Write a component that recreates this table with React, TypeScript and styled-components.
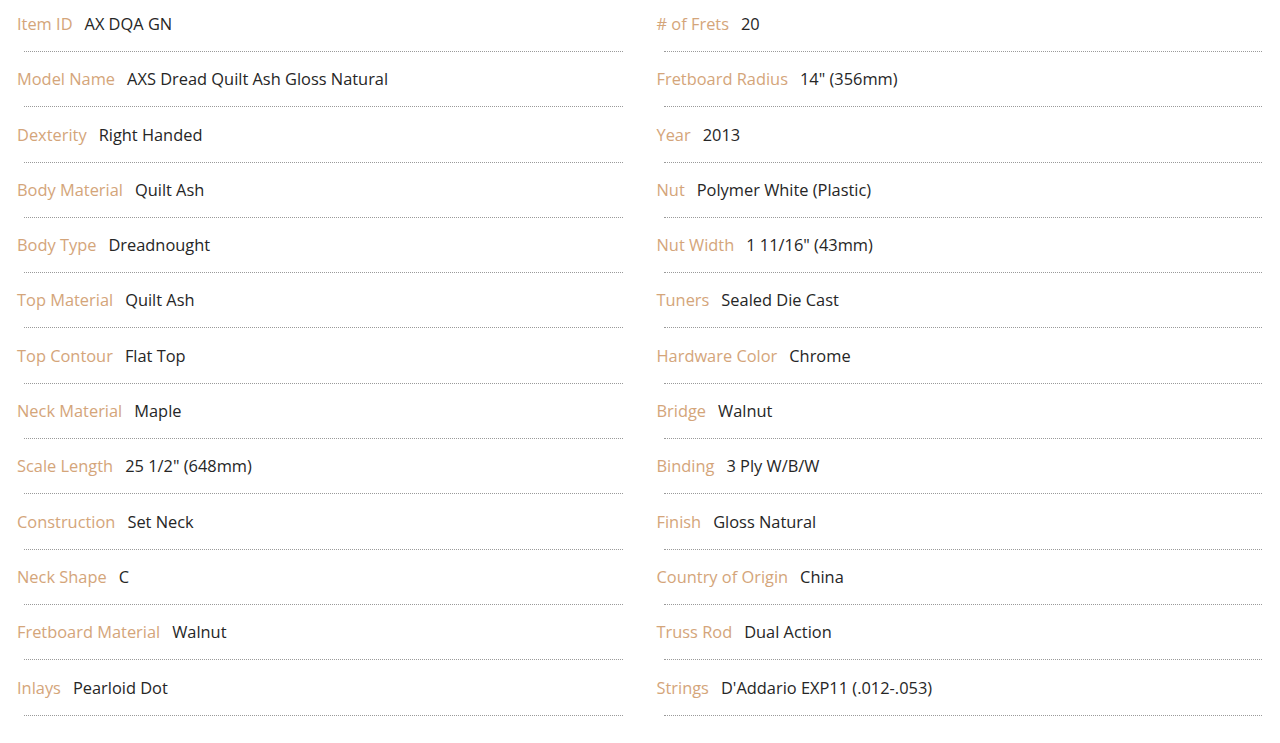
import React from "react";
import styled, { createGlobalStyle } from "styled-components";

const GlobalStyle = createGlobalStyle`
  body {
    margin: 0;
    background: #fff;
    font-family: "Open Sans", "Noto Sans", Arial, sans-serif;
  }
`;

const Specs = styled.div`
  display: grid;
  grid-template-columns: 1fr 1fr;
  column-gap: 34px;
  padding: 0 18px 0 17px;
`;

const Column = styled.ul`
  list-style: none;
  margin: 0;
  padding: 0;
`;

const Row = styled.li`
  padding-top: 13px;
  margin-bottom: 3.3px;
`;

const Line = styled.div`
  display: flex;
  gap: 12px;
  font-size: 16.4px;
  line-height: 22px;
  padding-bottom: 16px;
  white-space: nowrap;
`;

const Label = styled.span`
  color: #d4a57a;
`;

const Value = styled.span`
  color: #262626;
`;

const Rule = styled.div`
  margin-left: 7px;
  border-top: 1px dotted #9a9a9a;
`;

const left: [string, string][] = [
  ["Item ID", "AX DQA GN"],
  ["Model Name", "AXS Dread Quilt Ash Gloss Natural"],
  ["Dexterity", "Right Handed"],
  ["Body Material", "Quilt Ash"],
  ["Body Type", "Dreadnought"],
  ["Top Material", "Quilt Ash"],
  ["Top Contour", "Flat Top"],
  ["Neck Material", "Maple"],
  ["Scale Length", "25 1/2\" (648mm)"],
  ["Construction", "Set Neck"],
  ["Neck Shape", "C"],
  ["Fretboard Material", "Walnut"],
  ["Inlays", "Pearloid Dot"],
];

const right: [string, string][] = [
  ["# of Frets", "20"],
  ["Fretboard Radius", "14\" (356mm)"],
  ["Year", "2013"],
  ["Nut", "Polymer White (Plastic)"],
  ["Nut Width", "1 11/16\" (43mm)"],
  ["Tuners", "Sealed Die Cast"],
  ["Hardware Color", "Chrome"],
  ["Bridge", "Walnut"],
  ["Binding", "3 Ply W/B/W"],
  ["Finish", "Gloss Natural"],
  ["Country of Origin", "China"],
  ["Truss Rod", "Dual Action"],
  ["Strings", "D'Addario EXP11 (.012-.053)"],
];

const SpecColumn: React.FC<{ items: [string, string][] }> = ({ items }) => (
  <Column>
    {items.map(([label, value]) => (
      <Row key={label}>
        <Line>
          <Label>{label}</Label>
          <Value>{value}</Value>
        </Line>
        <Rule />
      </Row>
    ))}
  </Column>
);

export default function App() {
  return (
    <>
      <GlobalStyle />
      <Specs>
        <SpecColumn items={left} />
        <SpecColumn items={right} />
      </Specs>
    </>
  );
}
